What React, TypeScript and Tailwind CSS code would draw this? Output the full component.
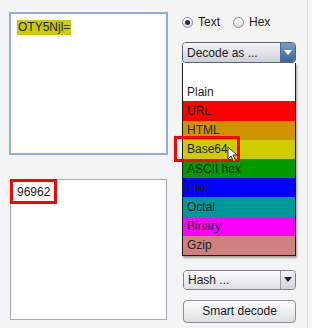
import React from "react";

const rows: { label: string; bg: string }[] = [
  { label: "", bg: "#ffffff" },
  { label: "Plain", bg: "#ffffff" },
  { label: "URL", bg: "#ff0000" },
  { label: "HTML", bg: "#d09300" },
  { label: "Base64", bg: "#cccc00" },
  { label: "ASCII hex", bg: "#009900" },
  { label: "Hex", bg: "#0000ff" },
  { label: "Octal", bg: "#009999" },
  { label: "Binary", bg: "#ff00ff" },
  { label: "Gzip", bg: "#d08080" },
];

function Radio({ checked }: { checked?: boolean }) {
  return (
    <div className="w-[11px] h-[11px] rounded-full border border-[#8a8f98] bg-gradient-to-b from-[#ffffff] to-[#d8dbe0] flex items-center justify-center">
      {checked && <div className="w-[5px] h-[5px] rounded-full bg-[#2a2e36]" />}
    </div>
  );
}

export default function App() {
  return (
    <div
      className="flex w-[312px] h-[328px] bg-[#f4f4f4] text-[12px] text-[#1a1a1a] overflow-hidden"
      style={{ fontFamily: '"Liberation Sans", Arial, sans-serif' }}
    >
      {/* Left column */}
      <div className="w-[182px] pl-[9px] pt-[12px] flex flex-col">
        <div className="w-[159px] h-[143px] border-2 border-[#8fb0d6] bg-white pl-[6px] pt-[4px]">
          <span className="inline-block bg-[#cccc00] h-[15px] leading-[15px] px-[1px] text-[#222]">
            OTY5Njl=
          </span>
        </div>
        <div className="relative ml-[1px] mt-[24px] w-[157px] h-[141px] border border-[#a6a9b4] bg-white">
          <div className="absolute left-[-1px] top-[-1px] w-[47px] h-[25px] border-[3px] border-[#ff0000]" />
          <div className="pl-[6px] pt-[5px] leading-[14px] text-[#222]">96962</div>
        </div>
      </div>

      {/* Right column */}
      <div className="w-[114px] pt-[16px] flex flex-col">
        <div className="flex items-center h-[12px]">
          <Radio checked />
          <span className="ml-[5px] leading-[12px]">Text</span>
          <div className="ml-[13px]">
            <Radio />
          </div>
          <span className="ml-[5px] leading-[12px]">Hex</span>
        </div>

        {/* Decode as dropdown */}
        <div className="mt-[14px] h-[21px] w-[114px] flex rounded-[4px] border border-[#5d636d] overflow-hidden">
          <div className="flex-1 bg-gradient-to-b from-[#f3f4f6] to-[#cdd1d8] pl-[4px] flex items-center">
            Decode as ...
          </div>
          <div className="w-[15px] bg-gradient-to-b from-[#7aa0cc] to-[#36649a] border-l border-[#4a6e9a] flex items-center justify-center">
            <div className="w-0 h-0 border-l-[4px] border-r-[4px] border-t-[5px] border-l-transparent border-r-transparent border-t-white" />
          </div>
        </div>

        {/* List */}
        <div className="relative w-[114px] border border-t-0 border-[#1c1c1c] bg-white shadow-[1px_2px_2px_rgba(0,0,0,0.35)]">
          {rows.map((r, i) => (
            <div
              key={i}
              className="h-[19.2px] pl-[4px] flex items-center text-[#1f1f1f]"
              style={{ backgroundColor: r.bg }}
            >
              {r.label}
            </div>
          ))}
          <div className="absolute left-[-9px] top-[73px] w-[66px] h-[26px] border-[3px] border-[#ff0000]" />
          <svg
            className="absolute left-[44px] top-[83px]"
            width="12"
            height="17"
            viewBox="0 0 12 17"
          >
            <path
              d="M1 1 L1 13 L4 10 L6.5 15.5 L8.5 14.5 L6 9 L10 9 Z"
              fill="#ffffff"
              stroke="#333"
              strokeWidth="1"
              strokeLinejoin="round"
            />
          </svg>
        </div>

        {/* Hash dropdown */}
        <div className="mt-[14px] ml-[1px] h-[20px] w-[113px] flex rounded-[4px] border border-[#7c8089] overflow-hidden">
          <div className="flex-1 bg-gradient-to-b from-[#fbfbfc] to-[#dde0e5] pl-[4px] flex items-center">
            Hash ...
          </div>
          <div className="w-[15px] bg-gradient-to-b from-[#f2f3f5] to-[#cfd3da] border-l border-[#9aa0aa] flex items-center justify-center">
            <div className="w-0 h-0 border-l-[4px] border-r-[4px] border-t-[5px] border-l-transparent border-r-transparent border-t-[#222]" />
          </div>
        </div>

        {/* Smart decode */}
        <div className="mt-[10px] ml-[1px] h-[23px] w-[113px] rounded-[4px] border border-[#8a8e96] bg-gradient-to-b from-[#fdfdfd] to-[#dcdfe3] flex items-center justify-center">
          Smart decode
        </div>
      </div>

      <div className="w-[11px]" />
      <div className="w-px h-full bg-[#d6d6d6]" />
    </div>
  );
}
